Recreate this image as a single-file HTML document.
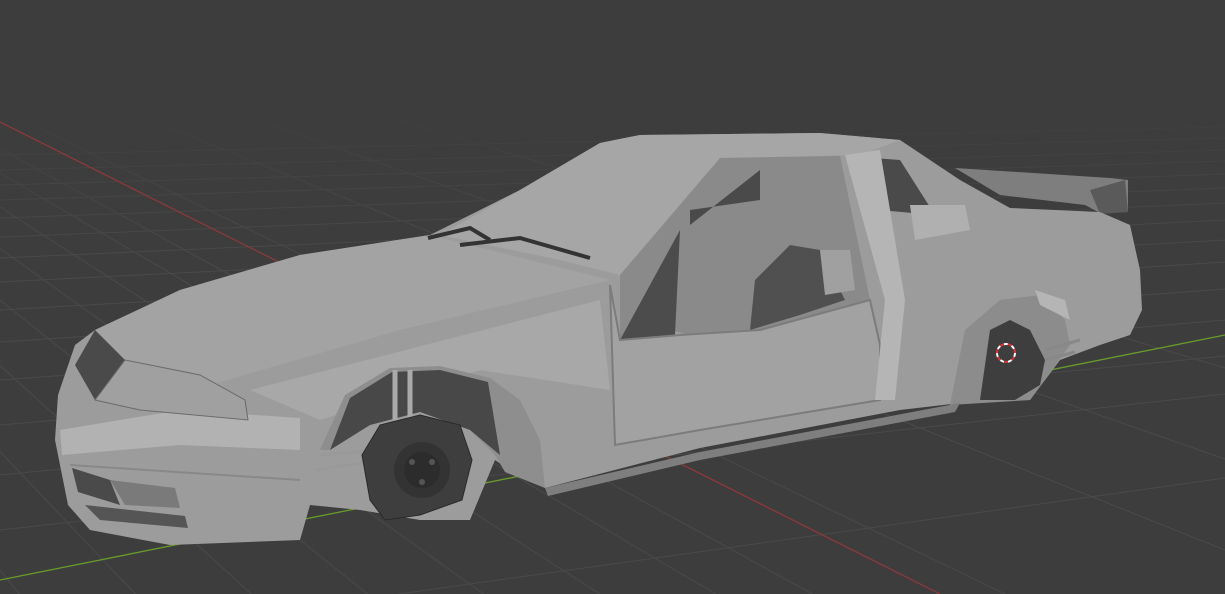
<!DOCTYPE html>
<html><head><meta charset="utf-8"><style>
html,body{margin:0;padding:0;background:#3d3d3d;width:1225px;height:594px;overflow:hidden}
svg{display:block}
</style></head><body>
<svg width="1225" height="594" viewBox="0 0 1225 594" xmlns="http://www.w3.org/2000/svg">
<defs>
<linearGradient id="fade" x1="0" y1="0" x2="0" y2="1">
<stop offset="0" stop-color="#3d3d3d" stop-opacity="1"/>
<stop offset="0.45" stop-color="#3d3d3d" stop-opacity="0.85"/>
<stop offset="1" stop-color="#3d3d3d" stop-opacity="0"/>
</linearGradient>
</defs>
<rect width="1225" height="594" fill="#3d3d3d"/>
<g stroke="#4a4a4a" stroke-width="1" fill="none">
<line x1="0" y1="155" x2="1225" y2="127"/>
<line x1="0" y1="170" x2="1225" y2="138"/>
<line x1="0" y1="185" x2="1225" y2="150"/>
<line x1="0" y1="200" x2="1225" y2="161"/>
<line x1="0" y1="218" x2="1225" y2="174"/>
<line x1="0" y1="237" x2="1225" y2="188"/>
<line x1="0" y1="258" x2="1225" y2="203"/>
<line x1="0" y1="282" x2="1225" y2="220"/>
<line x1="0" y1="310" x2="1225" y2="240"/>
<line x1="0" y1="342" x2="1225" y2="262"/>
<line x1="0" y1="380" x2="1225" y2="289"/>
<line x1="0" y1="425" x2="1225" y2="320"/>
<line x1="0" y1="475" x2="1225" y2="356"/>
<line x1="0" y1="530" x2="1225" y2="394"/>
<line x1="0" y1="650" x2="1225" y2="478"/>
<line x1="-600" y1="-180" x2="1225" y2="368"/>
<line x1="-600" y1="-180" x2="1225" y2="459"/>
<line x1="-600" y1="-180" x2="1225" y2="550"/>
<line x1="-600" y1="-180" x2="1225" y2="700"/>
<line x1="-600" y1="-180" x2="1225" y2="820"/>
<line x1="-600" y1="-180" x2="1100" y2="820"/>
<line x1="-600" y1="-180" x2="950" y2="820"/>
<line x1="-600" y1="-180" x2="800" y2="820"/>
<line x1="-600" y1="-180" x2="650" y2="820"/>
<line x1="-600" y1="-180" x2="500" y2="820"/>
<line x1="-600" y1="-180" x2="350" y2="820"/>
<line x1="-600" y1="-180" x2="200" y2="820"/>
<line x1="-600" y1="-180" x2="80" y2="820"/>
<line x1="-600" y1="-180" x2="-30" y2="820"/>
</g>
<rect x="0" y="0" width="1225" height="260" fill="url(#fade)"/>
<line x1="0" y1="122" x2="940" y2="594" stroke="#8a3a3a" stroke-width="1.3"/>
<line x1="0" y1="580" x2="1225" y2="335" stroke="#6a9a2a" stroke-width="1.3"/>

<path d="M955,168 L1110,178 L1128,180 L1128,212 L1100,213 L1085,205 L1000,195 Z" fill="#7e7e7e"/>
<path d="M1090,190 L1125,180 L1128,212 L1100,214 Z" fill="#5a5a5a"/>
<path d="M58,395 L75,345 L95,330 L180,290 L300,255 L430,235 L520,190 L600,143 L640,135 L820,133 L900,140 L960,180 L1010,208 L1100,212 L1130,225 L1140,270 L1142,310 L1130,335 L1100,345 L1060,360 L1030,400 L960,403 L900,410 L700,448 L545,488 L510,470 L495,460 L470,520 L420,520 L360,510 L310,505 L300,540 L170,545 L90,530 L68,505 L55,440 Z" fill="#9c9c9c"/>
<path d="M520,190 L600,143 L640,135 L820,133 L900,140 L860,155 L720,158 L620,275 L560,260 L440,235 Z" fill="#a6a6a6"/>
<path d="M95,330 L180,290 L300,255 L430,235 L610,280 L400,330 L210,385 L120,370 L95,355 Z" fill="#a3a3a3"/>
<path d="M250,390 L600,300 L610,390 L480,370 L320,420 Z" fill="#a8a8a8"/>
<path d="M60,430 L180,410 L300,418 L300,450 L180,445 L62,455 Z" fill="#b2b2b2"/>
<path d="M70,465 L300,480" stroke="#888" stroke-width="2" fill="none"/>
<path d="M75,365 L95,330 L125,360 L95,400 Z" fill="#4a4a4a"/>
<path d="M95,400 L125,360 L200,375 L245,400 L248,420 L140,410 Z" fill="#a0a0a0" stroke="#6a6a6a" stroke-width="1"/>
<path d="M72,468 L110,480 L120,505 L78,492 Z" fill="#4a4a4a"/>
<path d="M110,480 L175,488 L180,508 L125,505 Z" fill="#7a7a7a"/>
<path d="M85,505 L185,516 L188,528 L100,520 Z" fill="#555"/>
<path d="M620,275 L720,158 L840,156 L870,300 L880,345 L740,330 L690,335 L670,330 L620,340 Z" fill="#8a8a8a"/>
<path d="M690,225 L760,170 L760,200 L690,210 Z" fill="#4a4a4a"/>
<path d="M860,157 L900,160 L935,215 L880,210 Z" fill="#4a4a4a"/>
<path d="M620,340 L680,230 L675,335 Z" fill="#4c4c4c"/>
<path d="M750,330 L755,280 L790,245 L820,250 L845,300 L800,315 Z" fill="#505050"/>
<path d="M820,250 L850,250 L855,290 L825,295 Z" fill="#a0a0a0"/>
<path d="M910,205 L965,205 L970,230 L915,240 Z" fill="#b0b0b0"/>
<path d="M610,285 L620,340 L680,335 L760,330 L870,300 L880,345 L880,400 L700,430 L615,445 Z" fill="#a2a2a2" stroke="#7c7c7c" stroke-width="2"/>
<path d="M845,155 L880,150 L905,300 L895,400 L875,400 L885,300 Z" fill="#b5b5b5"/>
<path d="M428,238 L470,228 L490,240 M460,245 L520,238 L590,258" stroke="#333" stroke-width="4" fill="none"/>
<path d="M320,450 L345,395 L390,368 L440,366 L490,378 L520,400 L540,440 L545,488 L505,472 L495,455 L470,430 L420,410 L370,420 L330,450 Z" fill="#8e8e8e"/>
<path d="M330,450 L350,398 L392,372 L440,370 L488,382 L500,455 L470,430 L420,412 L370,425 Z" fill="#484848"/>
<path d="M395,370 L395,420 M410,370 L410,420" stroke="#aaa" stroke-width="5"/>
<path d="M315,470 L370,462 M320,455 L380,450" stroke="#999" stroke-width="3"/>
<path d="M362,455 L380,425 L420,415 L460,425 L472,460 L462,500 L420,515 L385,520 L370,500 Z" fill="#3e3e3e" stroke="#2a2a2a"/>
<circle cx="422" cy="470" r="28" fill="#333"/>
<circle cx="422" cy="470" r="18" fill="#2c2c2c"/>
<circle cx="412" cy="462" r="3" fill="#555"/><circle cx="432" cy="462" r="3" fill="#555"/><circle cx="422" cy="482" r="3" fill="#555"/>
<path d="M950,405 L965,330 L1000,300 L1040,295 L1065,320 L1070,345 L1030,400 Z" fill="#8c8c8c"/>
<path d="M1035,290 L1065,300 L1070,320 L1040,305 Z" fill="#b5b5b5"/>
<path d="M980,400 L990,330 L1010,320 L1030,330 L1045,360 L1040,385 L1015,400 Z" fill="#3e3e3e"/>
<path d="M1045,350 L1080,340 M1045,360 L1075,352" stroke="#888" stroke-width="3"/>
<circle cx="1006" cy="353" r="9" fill="none" stroke="#fff" stroke-width="2" stroke-dasharray="4 4"/>
<circle cx="1006" cy="353" r="9" fill="none" stroke="#d33" stroke-width="2" stroke-dasharray="4 4" stroke-dashoffset="4"/>
<path d="M545,488 L700,452 L960,403 L955,412 L700,460 L548,496 Z" fill="#7e7e7e"/>
</svg>
</body></html>
